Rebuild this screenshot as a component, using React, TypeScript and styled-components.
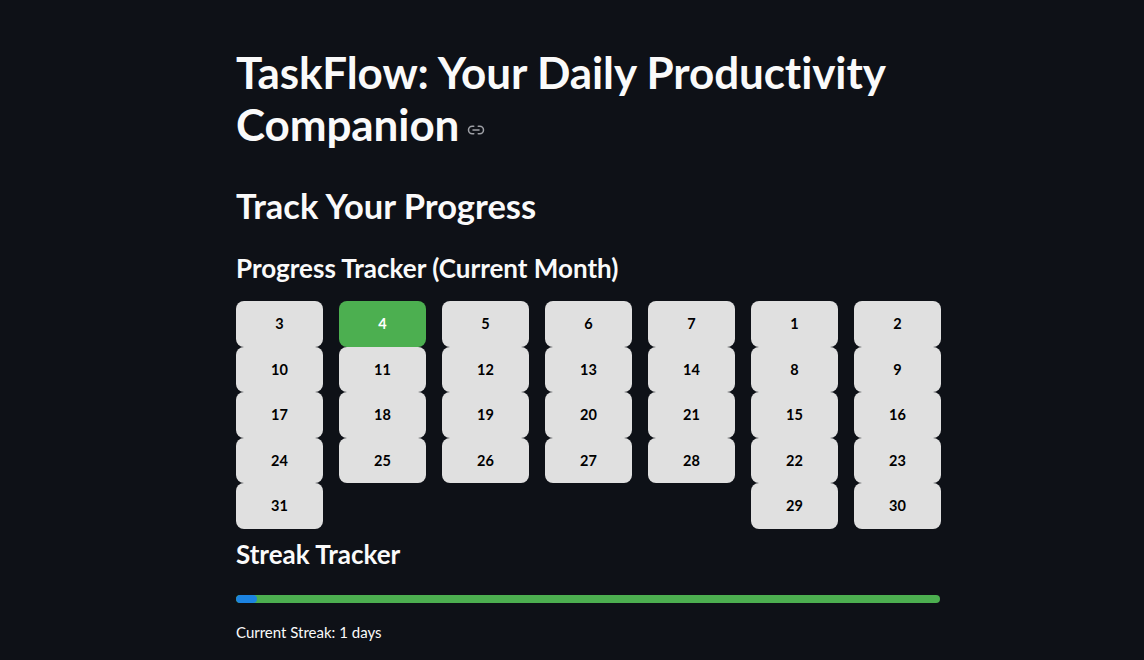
import React from "react";
import styled, { createGlobalStyle } from "styled-components";

const Global = createGlobalStyle`
  html, body { margin: 0; padding: 0; background: #0e1117; }
  body { font-family: "Lato", "Liberation Sans", sans-serif; color: #fafafa; }
  * { box-sizing: border-box; }
`;

const Page = styled.div`
  width: 1144px;
  height: 660px;
  overflow: hidden;
  background: #0e1117;
  padding: 46px 0 0 236px;
`;

const Main = styled.main`
  width: 704px;
  display: flex;
  flex-direction: column;
`;

const Title = styled.h1`
  margin: 0;
  font-size: 44px;
  font-weight: 700;
  line-height: 52px;
  letter-spacing: -0.1px;
`;

const LinkIcon = styled.svg`
  width: 18px;
  height: 18px;
  margin-left: 8px;
  vertical-align: middle;
  color: #9ea0a6;
`;

const H2 = styled.h2`
  margin: 34px 0 0;
  font-size: 34.5px;
  font-weight: 700;
  line-height: 44px;
`;

const H3 = styled.h3<{ $mt: number }>`
  margin: ${(p) => p.$mt}px 0 0;
  font-size: 26px;
  font-weight: 700;
  line-height: 36px;
`;

const Grid = styled.div`
  margin-top: 15px;
  display: grid;
  grid-template-columns: repeat(7, 87px);
  column-gap: 16px;
  align-items: start;
`;

const Column = styled.div`
  display: flex;
  flex-direction: column;
`;

const Day = styled.button<{ $active?: boolean }>`
  height: 45.5px;
  border: none;
  border-radius: 8px;
  background: ${(p) => (p.$active ? "#4caf50" : "#e0e0e0")};
  color: ${(p) => (p.$active ? "#ffffff" : "#000000")};
  font-family: inherit;
  font-size: 14.5px;
  font-weight: 700;
  padding: 0;
  cursor: pointer;
`;

const Track = styled.div`
  margin-top: 23px;
  height: 8px;
  border-radius: 4px;
  background: #4caf50;
  overflow: hidden;
`;

const Fill = styled.div`
  height: 100%;
  border-radius: 4px;
  background: #1c83e1;
`;

const Caption = styled.p`
  margin: 19px 0 0;
  font-size: 15px;
  line-height: 20px;
`;

const columns: number[][] = [
  [3, 10, 17, 24, 31],
  [4, 11, 18, 25],
  [5, 12, 19, 26],
  [6, 13, 20, 27],
  [7, 14, 21, 28],
  [1, 8, 15, 22, 29],
  [2, 9, 16, 23, 30],
];

export default function App() {
  return (
    <>
      <Global />
      <Page>
        <Main>
          <Title>
            TaskFlow: Your Daily Productivity Companion
            <LinkIcon viewBox="0 0 24 24" fill="none" stroke="currentColor" strokeWidth="2" strokeLinecap="round" strokeLinejoin="round">
              <path d="M9 17H7A5 5 0 0 1 7 7h2" />
              <path d="M15 7h2a5 5 0 1 1 0 10h-2" />
              <line x1="8" y1="12" x2="16" y2="12" />
            </LinkIcon>
          </Title>
          <H2>Track Your Progress</H2>
          <H3 $mt={22}>Progress Tracker (Current Month)</H3>
          <Grid>
            {columns.map((col, i) => (
              <Column key={i}>
                {col.map((d) => (
                  <Day key={d} $active={d === 4}>{d}</Day>
                ))}
              </Column>
            ))}
          </Grid>
          <H3 $mt={7}>Streak Tracker</H3>
          <Track>
            <Fill style={{ width: "3%" }} />
          </Track>
          <Caption>Current Streak: 1 days</Caption>
        </Main>
      </Page>
    </>
  );
}
